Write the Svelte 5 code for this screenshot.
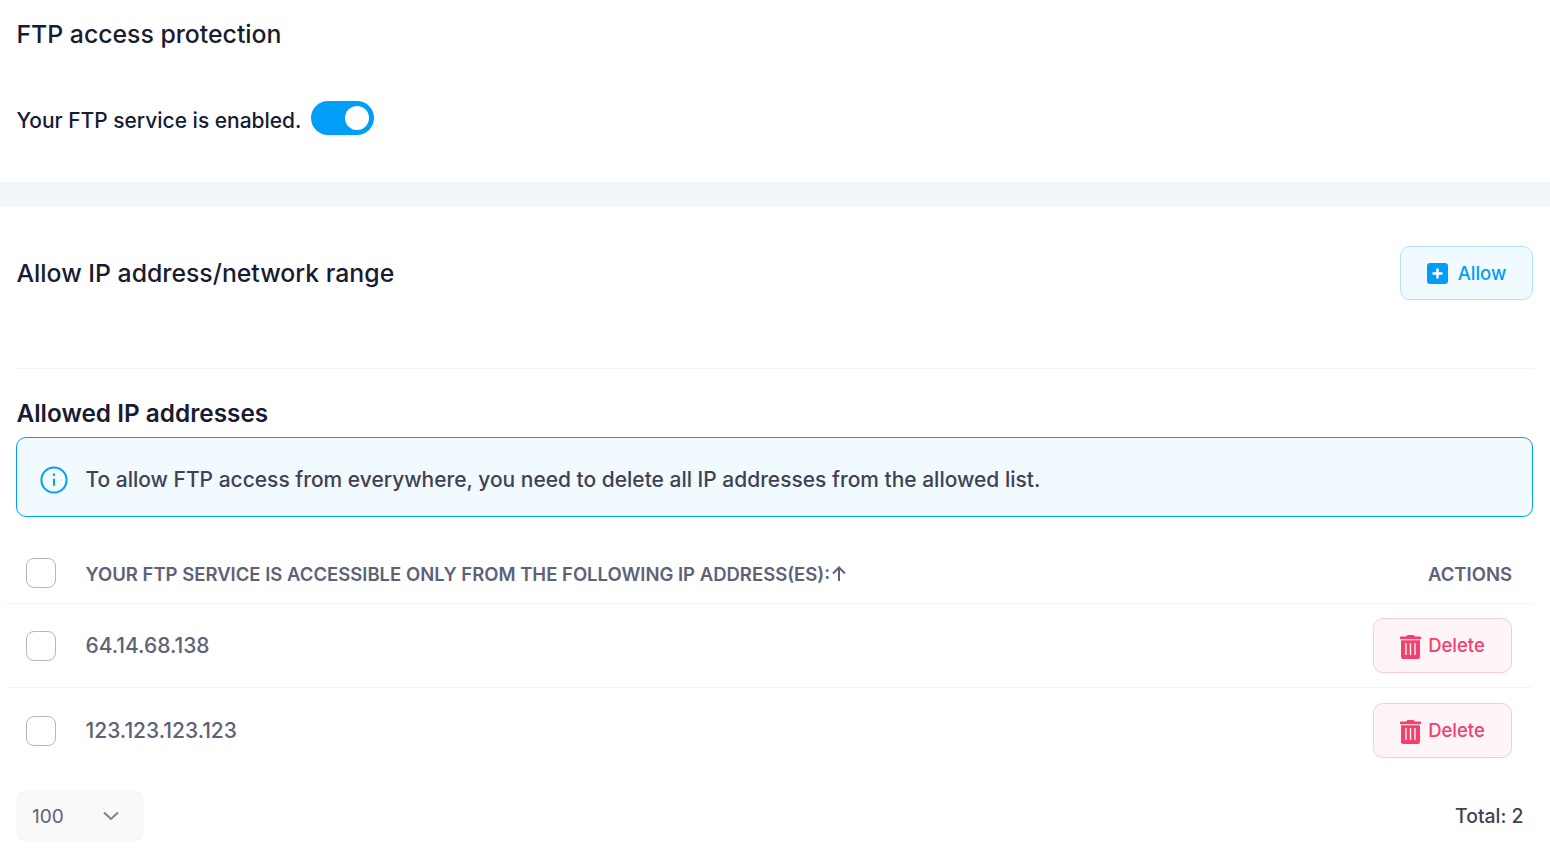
<script>
  const rows = ['64.14.68.138', '123.123.123.123'];
</script>

<div class="page">
  <section class="top">
    <h2 class="title">FTP access protection</h2>
    <div class="status">
      <span class="status-text">Your FTP service is enabled.</span>
      <span class="toggle"><span class="knob"></span></span>
    </div>
  </section>
  <div class="band"></div>
  <section class="main">
    <div class="allow-row">
      <h2 class="title">Allow IP address/network range</h2>
      <button class="allow-btn">
        <svg width="21" height="21" viewBox="0 0 21 21"><rect width="21" height="21" rx="3" fill="#009ef7"/><path d="M10.5 5.500v10M5.500 10.500h10" stroke="#fff" stroke-width="2.500"/></svg>
        <span>Allow</span>
      </button>
    </div>
    <h3 class="sub">Allowed IP addresses</h3>
    <div class="alert">
      <svg width="28" height="28" viewBox="0 0 28 28" fill="none"><circle cx="14" cy="14" r="12.6" stroke="#009ef7" stroke-width="2"/><path d="M14 12.8v7" stroke="#009ef7" stroke-width="2"/><circle cx="14" cy="8.8" r="1.2" fill="#009ef7"/></svg>
      <span>To allow FTP access from everywhere, you need to delete all IP addresses from the allowed list.</span>
    </div>
    <div class="table">
      <div class="row head">
        <span class="check"></span>
        <span class="col">YOUR FTP SERVICE IS ACCESSIBLE ONLY FROM THE FOLLOWING IP ADDRESS(ES):<svg class="arrow" width="14" height="15" viewBox="0 0 14 15" fill="none"><path d="M7 15V1.500M1 7.500l6-6 6 6" stroke="#5e6278" stroke-width="2"/></svg></span>
        <span class="actions">ACTIONS</span>
      </div>
      {#each rows as ip, i}
        <div class="row item" class:last={i === rows.length - 1}>
          <span class="check"></span>
          <span class="ip">{ip}</span>
          <button class="del">
            <svg width="21" height="24" viewBox="0 0 21 24"><path d="M7.500 0h6l1.500 1.500h5a1 1 0 0 1 0 2.800H1a1 1 0 0 1 0-2.800h5z" fill="#f1416c"/><path fill-rule="evenodd" d="M1 5.300h19V22a2 2 0 0 1-2 2H3a2 2 0 0 1-2-2zM5.300 8v12h1.400V8zM9.800 8v12h1.400V8zM14.300 8v12h1.400V8z" fill="#f1416c"/></svg>
            <span>Delete</span>
          </button>
        </div>
      {/each}
    </div>
    <div class="foot">
      <div class="select"><span>100</span><svg width="18" height="10" viewBox="0 0 18 10" fill="none"><path d="M2 1.500 9 8l7-6.500" stroke="#7e8299" stroke-width="2"/></svg></div>
      <span class="total">Total: 2</span>
    </div>
  </section>
</div>

<style>
  :global(body) { margin: 0; background: #fff; font-family: Inter, "Liberation Sans", sans-serif; color: #181c32; }
  .page { width: 1550px; height: 850px; overflow: hidden; }
  .top { height: 182px; padding: 19px 16.500px 0; box-sizing: border-box; }
  .title { margin: 0; font-size: 24.8px; font-weight: 500; line-height: 30px; color: #181c32; }
  .status { display: flex; align-items: flex-start; gap: 9.500px; margin-top: 52px; }
  .status-text { font-size: 20.96px; font-weight: 500; line-height: 30px; margin-top: 5px; }
  .toggle { width: 63px; height: 34px; border-radius: 17px; background: #009ef7; display: flex; align-items: center; justify-content: flex-end; padding-right: 5px; box-sizing: border-box; }
  .knob { width: 24px; height: 24px; border-radius: 50%; background: #fff; }
  .band { height: 25px; background: #f3f6f9; }
  .main { padding: 39px 17px 0 16px; }
  .allow-row { display: flex; justify-content: space-between; height: 122px; align-items: flex-start; border-bottom: 1px solid #f3f4f6; }
  .allow-row .title { margin: 12px 0 0 0.500px; }
  .allow-btn { width: 133px; height: 54px; box-sizing: border-box; display: flex; align-items: center; justify-content: center; gap: 10px; background: #f1faff; border: 1px solid #b3e2fd; border-radius: 10px; color: #009ef7; font: 500 18.5px Inter, sans-serif; padding: 0; }
  .sub { margin: 29px 0 0 0.500px; font-size: 24.35px; font-weight: 600; line-height: 30px; color: #181c32; }
  .alert { margin-top: 9px; height: 80px; box-sizing: border-box; display: flex; align-items: center; gap: 17.500px; padding-left: 23px; background: #f1faff; border: 1px solid #009ef7; border-radius: 10px; font-size: 20.98px; font-weight: 500; color: #3f4254; }
  .alert svg { margin-top: 6px; }
  .alert span { margin-top: 4px; }
  .table { margin: 27px 0 0 -10px; width: 1526px; }
  .row { display: flex; align-items: center; padding: 0 20px; border-bottom: 1px solid #f3f4f6; box-sizing: border-box; }
  .head { height: 60px; }
  .item { height: 84px; }
  .item.last { border-bottom: 0; height: 85px; }
  .check { width: 30px; height: 30px; box-sizing: border-box; border: 1px solid #b5b5c3; border-radius: 8px; background: #fff; margin-right: 30px; flex: none; }
  .head .check { margin-bottom: 2px; margin-right: 29.500px; }
  .col, .actions { font-size: 18.5px; font-weight: 600; color: #5e6278; }
  .col { flex: 1; display: flex; align-items: center; }
  .arrow { margin-left: 1.500px; }
  .ip { flex: 1; font-size: 21px; font-weight: 500; color: #5e6278; margin-left: -0.5px; }
  .del { width: 139px; height: 55px; box-sizing: border-box; display: flex; align-items: center; justify-content: center; gap: 7px; background: #fff5f8; border: 1px solid #fccad7; border-radius: 10px; color: #f1416c; font: 500 18.5px Inter, sans-serif; padding: 0; }
  .del svg { margin-top: 2px; }
  .del span { margin-bottom: 2px; }
  .foot { display: flex; justify-content: space-between; align-items: center; margin-top: 17px; padding-right: 9.500px; }
  .select { width: 128px; height: 52px; box-sizing: border-box; background: #f9f9f9; border-radius: 10px; display: flex; align-items: center; justify-content: space-between; padding: 0 24px 0 16px; font-size: 19px; color: #5e6278; }
  .total { font-size: 19.4px; font-weight: 500; color: #3f4254; }
</style>
